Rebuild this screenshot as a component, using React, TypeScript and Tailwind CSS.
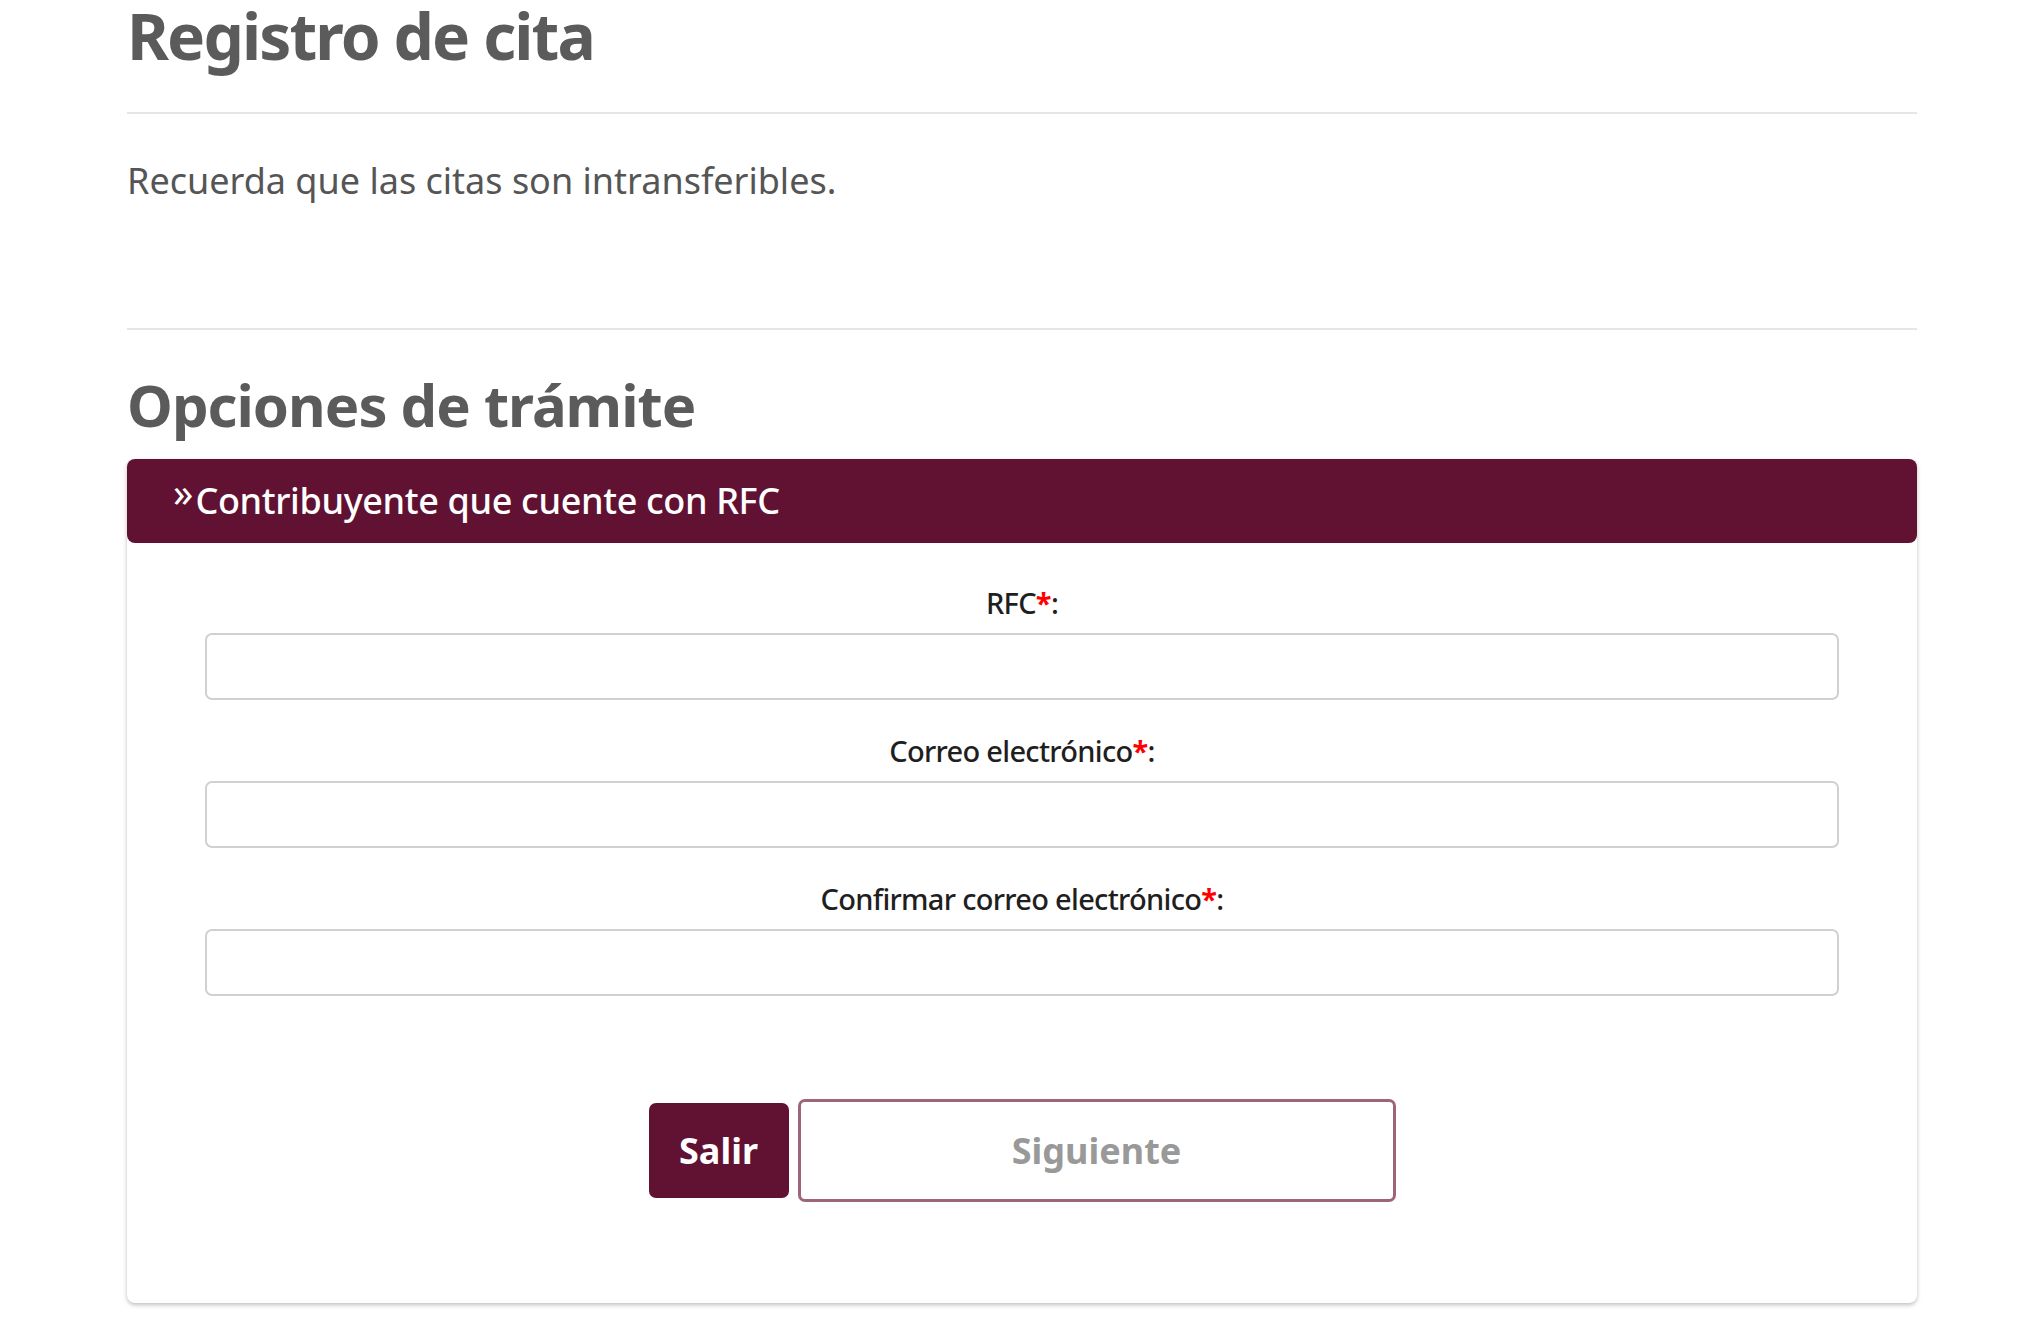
import React from "react";

const fields = [
  { id: "rfc", label: "RFC" },
  { id: "correo", label: "Correo electrónico" },
  { id: "confirmar", label: "Confirmar correo electrónico" },
];

export default function App() {
  return (
    <div className="min-h-screen bg-white font-['Noto_Sans',sans-serif]">
      <div className="ml-[127px] w-[1790px]">
        {/* Encabezado */}
        <h1 className="pt-px text-[64px] leading-[1.1] font-bold tracking-[-1.9px] text-[#5b5b5b]">Registro de cita</h1>
        <div className="mt-[41px] h-[2px] bg-[#e6e6e6]"></div>
        <p className="mt-[40px] text-[36px] leading-[54px] text-[#555555]">
          Recuerda que las citas son intransferibles.
        </p>
        <div className="mt-[120px] h-[2px] bg-[#e6e6e6]"></div>

        <h2 className="mt-[43px] text-[58px] leading-[1.1] font-bold tracking-[-1px] text-[#5b5b5b]">Opciones de trámite</h2>

        {/* Tarjeta */}
        <div className="mt-[22px] rounded-[8px] bg-white shadow-[0_2px_4px_rgba(0,0,0,0.25)]">
          <div className="flex h-[84px] items-center rounded-[8px] bg-[#611232] pl-[46px] text-white">
            <span className="self-start pt-[13px] text-[40px] leading-none">»</span>
            <span className="ml-[2px] text-[36px] font-medium tracking-[-0.35px]">Contribuyente que cuente con RFC</span>
          </div>

          <div className="px-[78px] pt-[40px] pb-[101px]">
            <div className="flex flex-col gap-[31px]">
              {fields.map((f) => (
                <div key={f.id} className="flex flex-col">
                  <label
                    htmlFor={f.id}
                    className="text-center text-[29px] leading-[40px] font-medium tracking-[-0.7px] text-[#1f1f1f]"
                  >
                    {f.label}
                    <span className="font-bold text-[#ff0000]">*</span>:
                  </label>
                  <input
                    id={f.id}
                    type="text"
                    className="mt-[10px] h-[67px] w-full rounded-[7px] border-2 border-[#d0d0d0] bg-white px-4 text-[28px] outline-none"
                  />
                </div>
              ))}
            </div>

            <div className="mt-[103px] flex items-center justify-center gap-[9px]">
              <button className="h-[95px] w-[140px] rounded-[7px] bg-[#611232] text-[36px] font-bold text-white">
                Salir
              </button>
              <button
                disabled
                className="h-[103px] w-[598px] rounded-[7px] border-[3px] border-[#9c6579] bg-white text-[36px] font-bold text-[#999999]"
              >
                Siguiente
              </button>
            </div>
          </div>
        </div>
      </div>
    </div>
  );
}
